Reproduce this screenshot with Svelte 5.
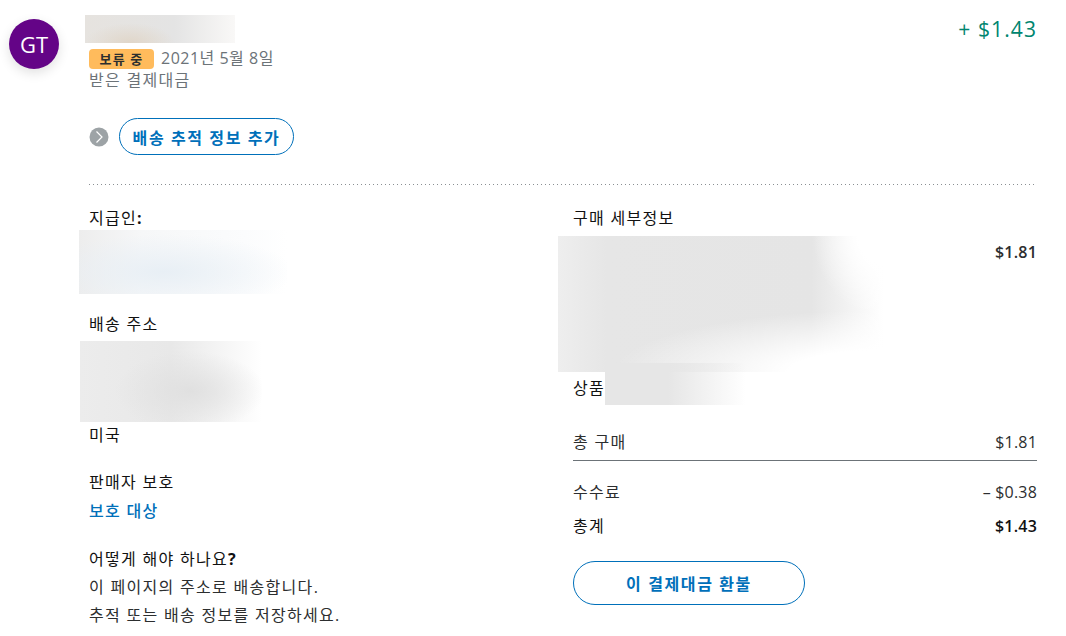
<script>
	const amount = '+ $1.43';
</script>

<div class="page">
	<div class="avatar">GT</div>
	<div class="main">
		<header class="top">
			<div class="top-left">
				<div class="redact name"></div>
				<div class="status">
					<span class="badge">보류 중</span>
					<span class="date">2021년 5월 8일</span>
				</div>
				<div class="kind">받은 결제대금</div>
				<div class="tracking">
					<span class="chevron">
						<svg width="20" height="20" viewBox="0 0 20 20">
							<circle cx="10" cy="10" r="9.5" fill="#9da3a6" />
							<path d="M7.5 4.5 L13 10 L7.5 15.5" fill="none" stroke="#fff" stroke-width="1.2" />
						</svg>
					</span>
					<button class="pill small">배송 추적 정보 추가</button>
				</div>
			</div>
			<div class="amount">{amount}</div>
		</header>

		<div class="dots"></div>

		<div class="columns">
			<section class="col">
				<div class="label">지급인<b>:</b></div>
				<div class="redact payer"></div>
				<div class="label ship">배송 주소</div>
				<div class="redact address"></div>
				<div class="label country">미국</div>

				<div class="label protect">판매자 보호</div>
				<a class="link" href="#top">보호 대상</a>

				<div class="label todo">어떻게 해야 하나요<b>?</b></div>
				<p class="note">이 페이지의 주소로 배송합니다.</p>
				<p class="note">추적 또는 배송 정보를 저장하세요.</p>
			</section>

			<section class="col">
				<div class="label">구매 세부정보</div>
				<div class="item">
					<div class="redact product"></div>
					<b class="price">$1.81</b>
				</div>
				<div class="goods">
					<span class="label">상품</span>
					<div class="redact goods-name"></div>
				</div>
				<div class="row subtotal">
					<span>총 구매</span><span>$1.81</span>
				</div>
				<div class="row fee">
					<span>수수료</span><span>– $0.38</span>
				</div>
				<div class="row total">
					<span>총계</span><b>$1.43</b>
				</div>
				<button class="pill refund">이 결제대금 환불</button>
			</section>
		</div>
	</div>
</div>

<style>
	:global(body) {
		margin: 0;
		background: #fff;
		overflow: hidden;
	}

	.page {
		height: 636px;
		overflow: hidden;
		display: flex;
		box-sizing: border-box;
		padding: 15px 29px 0 9px;
		font-family: 'Open Sans', 'Noto Sans CJK KR', sans-serif;
		font-size: 16px;
		color: #2c2e2f;
		letter-spacing: 1.3px;
	}

	.avatar {
		width: 50px;
		height: 50px;
		margin-top: 4px;
		margin-right: 30px;
		flex: none;
		border-radius: 50%;
		background: #640487;
		color: #fff;
		font-size: 22px;
		letter-spacing: 0;
		display: flex;
		align-items: center;
		justify-content: center;
		box-shadow: 0 4px 12px rgba(0, 0, 0, 0.12);
	}

	.main {
		flex: 1;
		min-width: 0;
	}

	.top {
		display: flex;
		justify-content: space-between;
		align-items: flex-start;
	}

	.redact {
		flex: none;
	}

	.name {
		width: 150px;
		height: 28px;
		margin-left: -4px;
		background:
			radial-gradient(ellipse 45px 20px at 45px 28px, #e0d6c9, transparent),
			linear-gradient(90deg, #e6e3df, #e4e4e4 60%, #f9f8f7);
	}

	.status {
		margin-top: 6px;
		height: 20px;
		display: flex;
		align-items: center;
		gap: 7px;
	}

	.badge {
		width: 65px;
		height: 20px;
		border-radius: 4px;
		background: #ffbb5c;
		font-size: 13px;
		font-weight: 700;
		letter-spacing: 1.2px;
		text-align: center;
		line-height: 20px;
	}

	.date,
	.kind {
		color: #6c7378;
	}

	.date {
		letter-spacing: 0.5px;
		margin-bottom: 4px;
	}

	.kind {
		line-height: 22px;
	}

	.tracking {
		margin-top: 27px;
		display: flex;
		align-items: center;
		gap: 10px;
	}

	.chevron {
		display: flex;
	}

	.pill {
		background: #fff;
		border: 1px solid #0070ba;
		border-radius: 22px;
		color: #0070ba;
		font: inherit;
		font-weight: 700;
		letter-spacing: 1.6px;
		padding: 0;
	}

	.small {
		width: 175px;
		height: 37px;
	}

	.amount {
		color: #00856f;
		font-size: 21px;
		letter-spacing: 1.1px;
		line-height: 28px;
	}

	.dots {
		margin-top: 29px;
		height: 1px;
		background: linear-gradient(90deg, #8a8f93 1px, transparent 1px) 0 0 / 4px 1px repeat-x;
	}

	.columns {
		margin-top: 22px;
		display: grid;
		grid-template-columns: 484px 1fr;
	}

	.label {
		line-height: 22px;
		color: #111;
	}

	.payer {
		width: 208px;
		height: 64px;
		margin: 1px 0 0 -10px;
		background:
			radial-gradient(ellipse 130px 38px at 85px 42px, #e8eff5, transparent),
			linear-gradient(90deg, #ededed, #f6f7f8 30%, #fbfcfd 80%, #fff);
	}

	.ship {
		margin-top: 19px;
	}

	.address {
		width: 182px;
		height: 81px;
		margin: 6px 0 0 -9px;
		background:
			radial-gradient(ellipse 75px 40px at 110px 50px, #e0e0e0, transparent),
			linear-gradient(90deg, #ececec, #e8e8e8 50%, #fff);
	}

	.country {
		margin-top: 2px;
	}

	.protect {
		margin-top: 25px;
	}

	.link {
		display: block;
		margin-top: 7px;
		line-height: 22px;
		color: #0070ba;
		font-weight: 500;
		text-decoration: none;
	}

	.todo {
		margin-top: 26px;
	}

	.note {
		margin: 6px 0 0;
		line-height: 22px;
		color: #2c2e2f;
	}

	.item {
		display: flex;
		justify-content: space-between;
		align-items: flex-start;
	}

	.product {
		width: 325px;
		height: 136px;
		margin: 7px 0 0 -15px;
		background:
			radial-gradient(ellipse 270px 62px at 100% 100%, #fff 35%, rgba(255, 255, 255, 0)),
			radial-gradient(ellipse 70px 80px at 100% 0, #fff 35%, rgba(255, 255, 255, 0)),
			linear-gradient(90deg, #eeeeee, #e6e6e6 15%, #e5e5e5 78%, #fff);
	}

	.price {
		margin-top: 12px;
		line-height: 22px;
		letter-spacing: 0.2px;
		font-weight: 600;
	}

	.goods {
		display: flex;
		align-items: flex-end;
		margin-top: -9px;
	}

	.goods .label {
		padding-bottom: 6px;
		flex: none;
		width: 32px;
		white-space: nowrap;
	}

	.goods-name {
		width: 141px;
		height: 42px;
		background: linear-gradient(90deg, #e6e6e6, #e6e6e6 45%, rgba(230, 230, 230, 0));
	}

	.row {
		display: flex;
		justify-content: space-between;
		line-height: 22px;
	}

	.row span:last-child,
	.row b {
		letter-spacing: 0.2px;
	}

	.subtotal {
		margin-top: 26px;
		padding-bottom: 7px;
		border-bottom: 1px solid #6c7378;
	}

	.fee {
		margin-top: 20px;
	}

	.total {
		margin-top: 12px;
		color: #111;
	}

	.total b {
		font-weight: 600;
	}

	.refund {
		display: block;
		margin-top: 24px;
		width: 232px;
		height: 44px;
	}
</style>
